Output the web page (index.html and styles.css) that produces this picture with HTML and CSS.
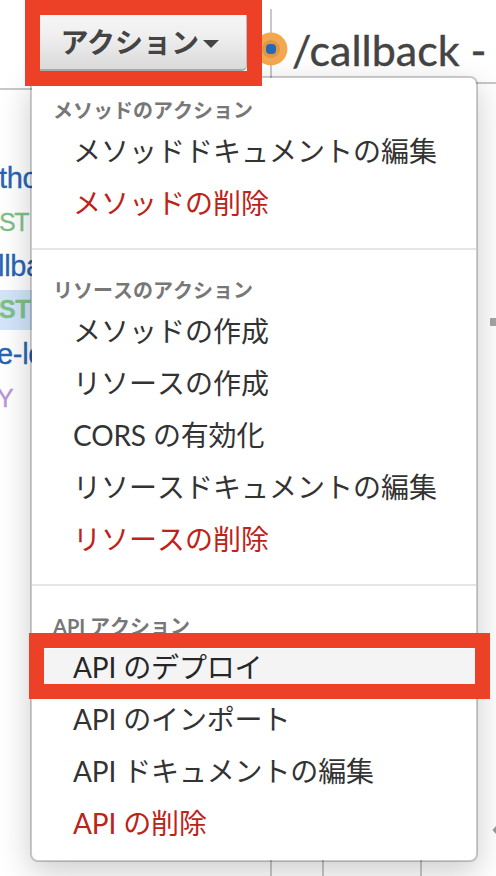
FILE: index.html
```html
<!DOCTYPE html>
<html lang="ja">
<head>
<meta charset="utf-8">
<title>API</title>
<link rel="stylesheet" href="styles.css">
</head>
<body>
<div class="page">
  <aside class="sidebar">
    <div class="toolbar"></div>
    <ul class="tree">
      <li class="resource r1">tho</li>
      <li class="method">ST</li>
      <li class="resource r2">llba</li>
      <li class="method selected">ST</li>
      <li class="resource r3">e-lo</li>
      <li class="method any">Y</li>
    </ul>
  </aside>
  <main class="main">
    <header class="title">/callback -</header>
    <div class="canvas"><div class="column"></div></div>
  </main>
  <svg class="handle" width="34" height="34" viewBox="0 0 34 34"><circle cx="17" cy="17" r="16.4" fill="#f4a84e"/><circle cx="17" cy="17" r="9" fill="#dc9848"/><rect x="12" y="12" width="10" height="10" rx="4" fill="#2a66b8"/></svg>
  <svg class="dash" width="6" height="8"><rect width="9" height="8" rx="1" fill="#a5a5a5"/></svg>
  <svg class="arrow" width="4" height="10" viewBox="0 0 4 10"><path d="M4 1 L0.5 5 L4 9Z" fill="#999"/></svg>

  <nav class="menu">
    <section class="group">
      <h3>メソッドのアクション</h3>
      <a>メソッドドキュメントの編集</a>
      <a class="danger">メソッドの削除</a>
    </section>
    <section class="group">
      <h3>リソースのアクション</h3>
      <a>メソッドの作成</a>
      <a>リソースの作成</a>
      <a class="latin">CORS の有効化</a>
      <a>リソースドキュメントの編集</a>
      <a class="danger">リソースの削除</a>
    </section>
    <section class="group">
      <h3>API アクション</h3>
      <a class="latin active">API のデプロイ</a>
      <a class="latin">API のインポート</a>
      <a class="latin">API ドキュメントの編集</a>
      <a class="latin danger">API の削除</a>
    </section>
  </nav>
  <div class="mark mark-button"><button class="actions">アクション<i class="caret"></i></button></div>
  <div class="mark mark-item"></div>
</div>
</body>
</html>
```
FILE: styles.css
```css
* { box-sizing: border-box; }
body { margin: 0; background: #fff; font-family: Lato, "Noto Sans CJK JP", sans-serif; }
.page { position: relative; display: flex; width: 496px; height: 876px; overflow: hidden; }
.sidebar { width: 272px; border-right: 2px solid #c8c8c8; border-image: linear-gradient(transparent 10px, #c8c8c8 10px) 1; }
.toolbar { height: 90px; border-bottom: 2px solid #c8c8c8; }
.tree { margin: 0; padding: 68px 0 0; list-style: none; font-family: "Liberation Sans", sans-serif; }
.tree li { height: 40px; margin-bottom: 4px; line-height: 41px; white-space: nowrap; -webkit-text-stroke: .3px; }
.resource { color: #2864b4; font-size: 29px; letter-spacing: -.3px; }
.r1 { text-indent: -1px; }
.r2 { text-indent: -2px; }
.r3 { text-indent: -3px; }
.method { color: #7fc08a; font-size: 25px; text-indent: -1px; letter-spacing: -1.5px; }
.tree .selected { background: #d2e5fb; font-weight: bold; line-height: 39px; letter-spacing: -.5px; }
.tree .any { color: #ba94d4; text-indent: -3px; line-height: 40px; }
.main { flex: 1; display: flex; flex-direction: column; }
.title { height: 84px; padding: 24px 0 0 20px; border-bottom: 2px solid #c8c8c8; color: #444; font-size: 43px; line-height: 52px; white-space: nowrap; -webkit-text-stroke: .4px; }
.canvas { flex: 1; display: flex; padding-left: 50px; }
.column { width: 100px; border: solid #c8c8c8; border-width: 0 2px; }
.handle { position: absolute; left: 254px; top: 32px; }
.dash { position: absolute; left: 490px; top: 318px; }
.arrow { position: absolute; left: 492px; top: 825px; }
.menu { position: absolute; left: 30px; top: 76px; width: 448px; height: 786px; background: #fff; background-clip: padding-box; border: 2px solid rgba(0,0,0,.2); border-radius: 8px; box-shadow: 0 10px 32px rgba(0,0,0,.2); }
.group { padding-bottom: 19px; }
.group + .group { border-top: 2px solid #e5e5e5; padding-top: 8px; }
.group h3 { margin: 0; height: 47px; padding: 17px 0 0 21px; color: #777; font-size: 20px; line-height: 30px; font-weight: bold; font-kerning: none; }
.group a { display: block; height: 52px; padding-left: 41px; color: #333; font-size: 28px; line-height: 52px; white-space: nowrap; font-kerning: none; }
.group .latin { letter-spacing: -.15px; font-kerning: auto; }
.group .danger { color: #bd2318; }
.group .active { color: #262626; background: linear-gradient(#f4f4f4, #f4f4f4) 0 8px / 100% 36px no-repeat; }
.mark { position: absolute; border: 15px solid #ec4126; }
.mark-button { left: 24.5px; top: 0; width: 237.5px; height: 86px; }
.mark-item { left: 28.5px; top: 633px; width: 461.5px; height: 66px; }
.actions { display: flex; align-items: center; gap: 4px; width: 100%; height: 100%; padding: 0 0 1px 21px; border: 0; border-right: 1px solid #bbb; border-bottom: 2px solid #aaa; border-radius: 0 0 5px; background: linear-gradient(#f5f5f5, #f0f0f0 35%, #dadada); color: #444; font: bold 28px/40px Lato, "Noto Sans CJK JP", sans-serif; white-space: nowrap; }
.caret { border: 8px solid transparent; border-top-color: #444; border-bottom: 0; position: relative; top: 2px; }
```
